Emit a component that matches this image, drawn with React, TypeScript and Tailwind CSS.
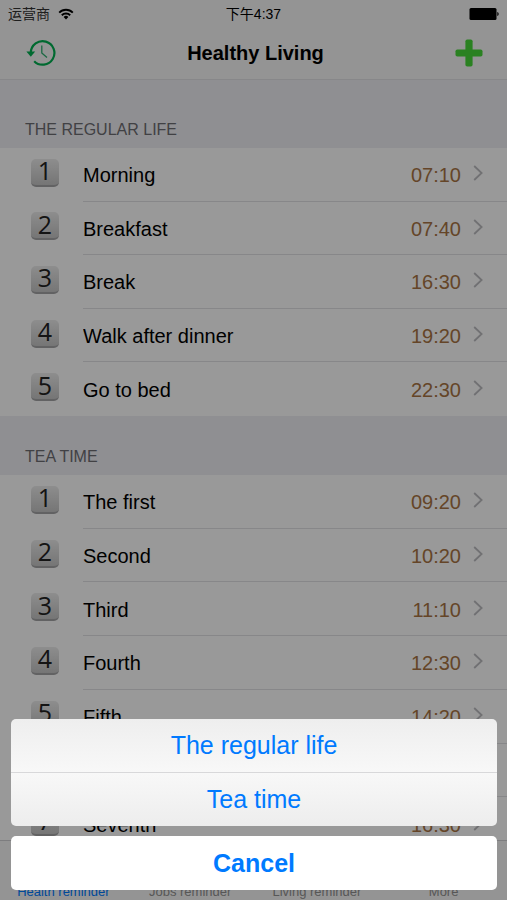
import React, { useState } from "react";

interface Reminder {
  id: number;
  title: string;
  time: string;
}

interface ReminderGroup {
  id: string;
  title: string;
  heightClass: string;
  headerClass: string;
  items: Reminder[];
}

const GROUPS: ReminderGroup[] = [
  {
    id: "regular",
    title: "The regular life",
    heightClass: "h-[268px]",
    headerClass: "h-[68px]",
    items: [
      { id: 1, title: "Morning", time: "07:10" },
      { id: 2, title: "Breakfast", time: "07:40" },
      { id: 3, title: "Break", time: "16:30" },
      { id: 4, title: "Walk after dinner", time: "19:20" },
      { id: 5, title: "Go to bed", time: "22:30" },
    ],
  },
  {
    id: "tea",
    title: "Tea time",
    heightClass: "h-[376px]",
    headerClass: "h-[59px]",
    items: [
      { id: 1, title: "The first", time: "09:20" },
      { id: 2, title: "Second", time: "10:20" },
      { id: 3, title: "Third", time: "11:10" },
      { id: 4, title: "Fourth", time: "12:30" },
      { id: 5, title: "Fifth", time: "14:20" },
      { id: 6, title: "Sixth", time: "15:30" },
      { id: 7, title: "Seventh", time: "16:30" },
    ],
  },
];

const TABS = ["Health reminder", "Jobs reminder", "Living reminder", "More"];

const WifiIcon = () => (
  <svg viewBox="0 0 16 12" className="h-3 w-4" fill="none" stroke="black">
    <path d="M1.2 4.6a9.6 9.6 0 0 1 13.6 0" strokeWidth="1.9" />
    <path d="M3.8 7.2a6 6 0 0 1 8.4 0" strokeWidth="1.9" />
    <path d="M8 11.4 5.6 9a3.4 3.4 0 0 1 4.8 0z" fill="black" stroke="none" />
  </svg>
);

const BatteryIcon = () => (
  <svg viewBox="0 0 30 12" className="h-3 w-[30px]">
    <rect x="0.5" y="0" width="27" height="12" rx="1.5" />
    <path d="M28.3 4c1.8.4 1.8 3.6 0 4z" />
  </svg>
);

const HistoryIcon = () => (
  <svg viewBox="0 0 30 28" className="h-7 w-[30px]" fill="none">
    <path
      d="M4.8 13.6A11.8 11.8 0 1 1 8.2 22.2"
      stroke="#00b050"
      strokeWidth="2.2"
    />
    <path d="M0.4 12.6h8.8l-4.4 5.2z" fill="#00b050" />
    <path
      d="M15.8 6.5v7.5l5.2 4.6"
      stroke="#2fae70"
      strokeWidth="1.3"
      strokeLinejoin="round"
    />
  </svg>
);

const PlusIcon = () => (
  <svg viewBox="0 0 28 28" className="h-7 w-7" fill="#46d838">
    <rect x="10.4" y="0.5" width="7.2" height="27" rx="1.8" />
    <rect x="0.5" y="10.4" width="27" height="7.2" rx="1.8" />
  </svg>
);

const Chevron = () => (
  <svg viewBox="0 0 10 16" className="mb-1 h-4 w-[10px]" fill="none">
    <path d="M1.2 1 8.6 8l-7.4 7" stroke="#bcbcc0" strokeWidth="1.8" />
  </svg>
);

const ReminderRow: React.FC<{ item: Reminder; isLast: boolean }> = ({
  item,
  isLast,
}) => (
  <li className="flex min-h-0 bg-white pl-[31px]">
    <button className="flex min-w-0 flex-1 items-center text-left text-xl leading-6">
      <span className="mb-1 flex h-7 w-7 shrink-0 items-center justify-center rounded-[5px] border-b-2 border-[#a4a4a6] bg-linear-to-b from-[#ececec] to-[#c4c4c4] pb-[3px] font-['Open_Sans',sans-serif] text-[25px] leading-6 text-[#222]">
        {item.id}
      </span>
      <span
        className={`ml-6 flex h-full min-w-0 flex-1 items-center pt-[2px] pr-6 ${
          isLast ? "" : "border-b border-[#e2e2e5]"
        }`}
      >
        <span className="flex-1 truncate">{item.title}</span>
        <span className="mr-3 text-[#a87444]">{item.time}</span>
        <Chevron />
      </span>
    </button>
  </li>
);

export default function App() {
  const [sheetOpen, setSheetOpen] = useState(true);
  const [activeTab, setActiveTab] = useState(TABS[0]);
  const closeSheet = () => setSheetOpen(false);

  return (
    <div className="relative flex h-screen flex-col overflow-hidden bg-[#efeff4] font-['Liberation_Sans','Noto_Sans_CJK_SC',sans-serif] text-black">
      <header className="shrink-0 border-b border-[#e2e2e5] bg-[#f7f7f7]">
        <div className="grid h-[27px] grid-cols-3 items-center px-2 text-sm leading-5">
          <span className="flex items-center gap-2 text-[#333]">
            运营商 <WifiIcon />
          </span>
          <span className="text-center">下午4:37</span>
          <span className="flex justify-end">
            <BatteryIcon />
          </span>
        </div>
        <div className="flex h-[52px] items-center justify-between pr-6 pl-[26px]">
          <button aria-label="History">
            <HistoryIcon />
          </button>
          <h1 className="text-xl font-bold">Healthy Living</h1>
          <button aria-label="Add" onClick={() => setSheetOpen(true)}>
            <PlusIcon />
          </button>
        </div>
      </header>

      <main className="min-h-0 flex-1 overflow-y-auto [scrollbar-width:none]">
        {GROUPS.map((group) => (
          <section key={group.id}>
            <h2
              className={`flex items-end px-[25px] pb-2 text-base leading-5 text-[#6d6d72] uppercase ${group.headerClass}`}
            >
              {group.title}
            </h2>
            <ul className={`grid auto-rows-fr ${group.heightClass}`}>
              {group.items.map((item, i) => (
                <ReminderRow
                  key={item.id}
                  item={item}
                  isLast={i === group.items.length - 1}
                />
              ))}
            </ul>
          </section>
        ))}
      </main>

      <nav className="grid h-[60px] shrink-0 grid-cols-4 border-t border-[#d0d0d4] bg-[#f7f7f7] text-[13px] leading-4">
        {TABS.map((tab) => (
          <button
            key={tab}
            onClick={() => setActiveTab(tab)}
            className={`flex items-end justify-center whitespace-nowrap ${
              tab === activeTab ? "text-[#007aff]" : "text-[#929292]"
            }`}
          >
            {tab}
          </button>
        ))}
      </nav>

      {/* Action sheet */}
      {sheetOpen && (
        <div
          role="dialog"
          aria-label="Choose a group"
          className="absolute inset-0 flex flex-col justify-end gap-[10px] bg-black/40 py-[10px] pr-[10px] pl-[11px] text-[25px] leading-8 text-[#007aff]"
        >
          <div className="grid h-[107px] auto-rows-fr divide-y divide-[#d8d8da] overflow-hidden rounded-[5px] bg-linear-to-b from-[#eeeeee] via-[#f8f8f8] to-[#ededed]">
            {GROUPS.map((group) => (
              <button key={group.id} onClick={closeSheet}>
                {group.title}
              </button>
            ))}
          </div>
          <button
            className="h-[54px] rounded-[5px] bg-white font-bold"
            onClick={closeSheet}
          >
            Cancel
          </button>
        </div>
      )}
    </div>
  );
}
